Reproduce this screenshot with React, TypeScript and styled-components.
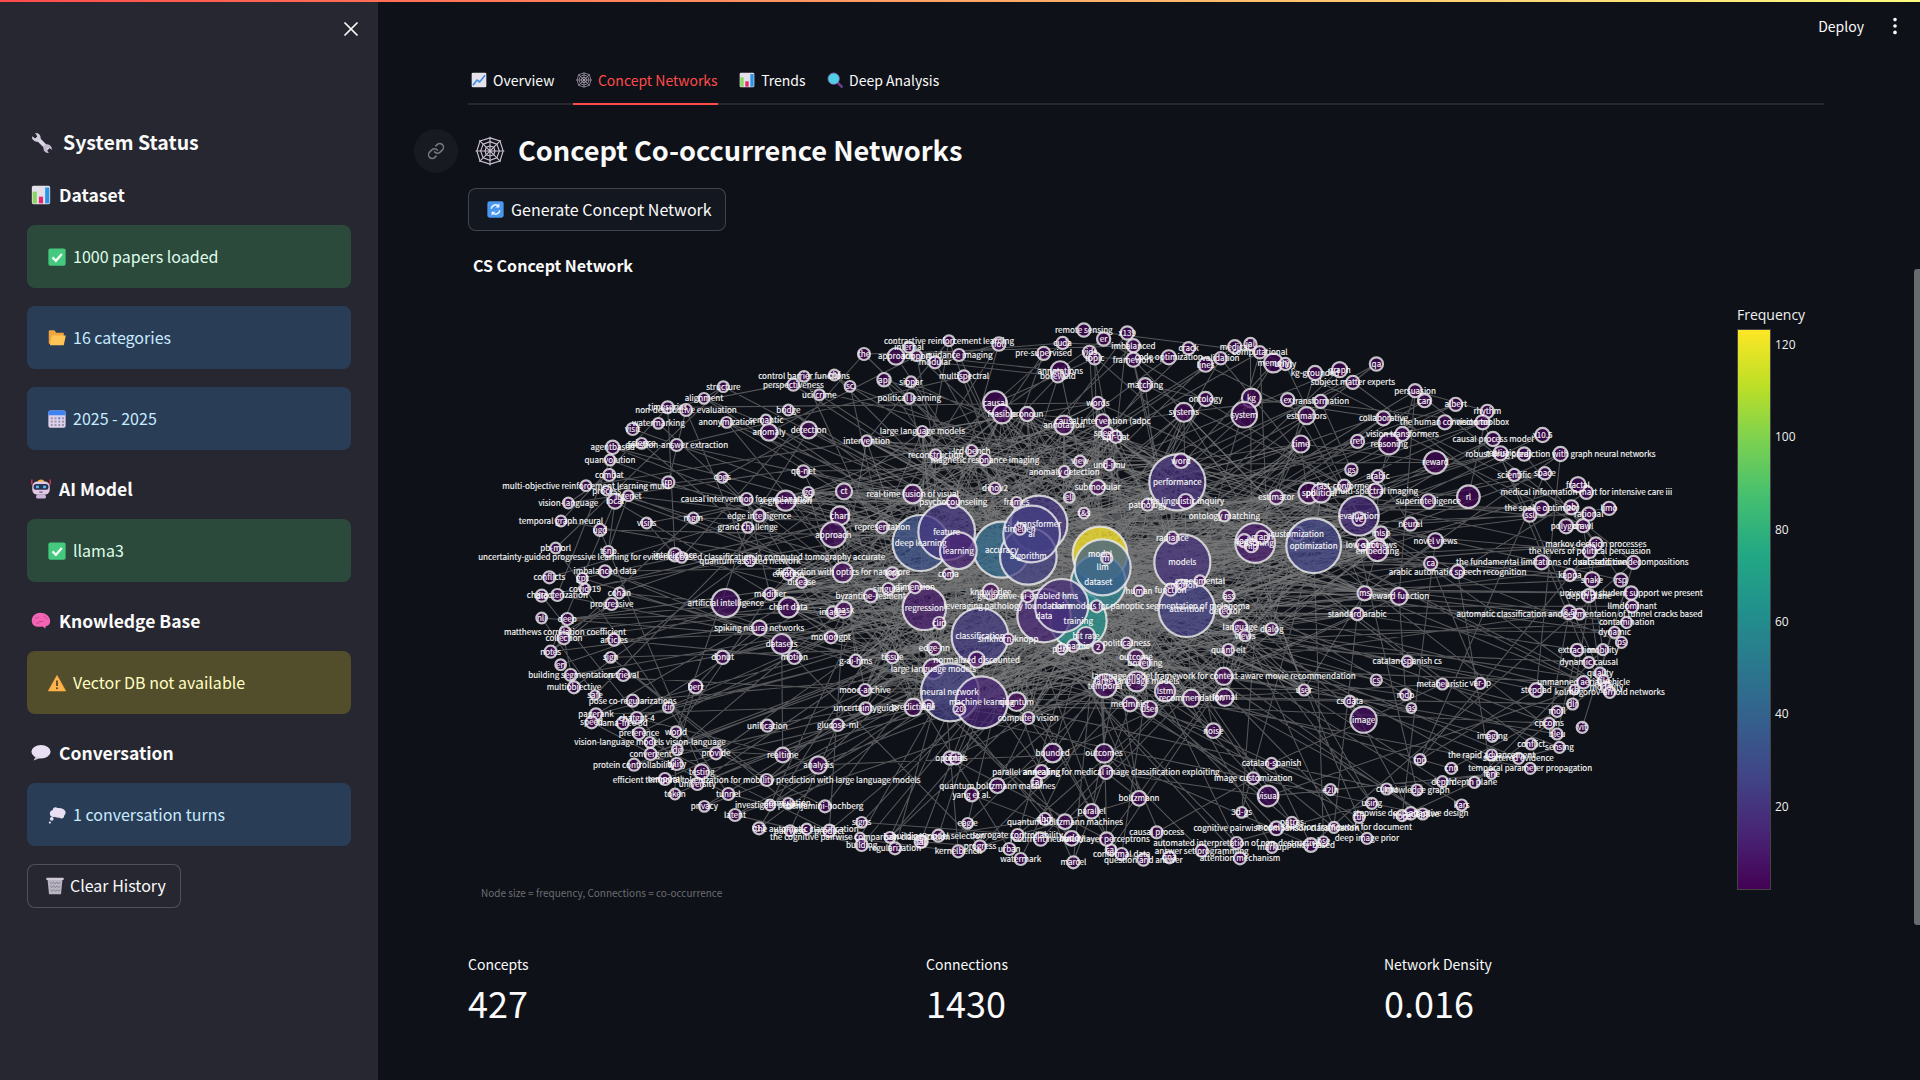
import React from "react";
import styled, { createGlobalStyle } from "styled-components";
import { EllipsisVertical, Link as LinkIcon, X } from "lucide-react";

const FONT = `"Noto Sans CJK SC", "Noto Sans", sans-serif`;

/* ---------- little emoji drawings ---------- */

const Glyph = styled.svg<{ $size?: number }>`
  width: ${({ $size }) => $size ?? 18}px;
  height: ${({ $size }) => $size ?? 18}px;
  flex-shrink: 0;
  display: block;
`;

type IconProps = { size?: number };

const WrenchIcon = ({ size }: IconProps) => (
  <Glyph $size={size} viewBox="0 0 24 24">
    <path d="M6 6L19 19" stroke="#dcd6e6" strokeWidth="4.4" />
    <path d="M1 4.5A5.500 5.500 0 0 0 9 10L10.500 7A5.500 5.500 0 0 0 4.500 1L7 5 4.800 7Z" fill="#d4cde0" />
    <path d="M23 19.500A5.500 5.500 0 0 0 15 14L13.500 17A5.500 5.500 0 0 0 19.500 23L17 19 19.200 17Z" fill="#c2bbcf" />
  </Glyph>
);

const BarsIcon = ({ size }: IconProps) => (
  <Glyph $size={size} viewBox="0 0 24 24">
    <rect x="1" y="1" width="22" height="22" rx="2" fill="#e4e0ea" />
    <rect x="2" y="8" width="5" height="14" fill="#8bd65f" />
    <rect x="9.5" y="14" width="5" height="8" fill="#e8256f" />
    <rect x="17" y="3" width="5" height="19" fill="#2a95e8" />
  </Glyph>
);

const TrendIcon = ({ size }: IconProps) => (
  <Glyph $size={size} viewBox="0 0 24 24">
    <rect x="1" y="1" width="22" height="22" rx="2" fill="#e6e2ec" />
    <path d="M3 20L9 12 13 15 21 5" fill="none" stroke="#3c8fe6" strokeWidth="2.4" />
  </Glyph>
);

const CheckIcon = ({ size }: IconProps) => (
  <Glyph $size={size} viewBox="0 0 24 24">
    <rect x="0.5" y="0.5" width="23" height="23" rx="2.5" fill="#45c97f" />
    <path d="M6 12.5L10.5 17 18.5 8" fill="none" stroke="#f5fff8" strokeWidth="3" />
  </Glyph>
);

const FolderIcon = ({ size }: IconProps) => (
  <Glyph $size={size} viewBox="0 0 24 24">
    <path d="M1 3a1.5 1.5 0 0 1 1.5-1.5h6L11 5h10v15H2.5A1.5 1.5 0 0 1 1 18.5Z" fill="#f0a63c" />
    <path d="M5 8.500h17.500a1 1 0 0 1 1 1.200L21 21.500H2.500Z" fill="#ffc456" />
  </Glyph>
);

const CalendarIcon = ({ size }: IconProps) => (
  <Glyph $size={size} viewBox="0 0 24 24">
    <rect x="0.5" y="0.5" width="23" height="23" rx="2.5" fill="#ddd2ea" />
    <path d="M0.500 7V3A2.500 2.500 0 0 1 3 0.500h18A2.500 2.500 0 0 1 23.500 3v4Z" fill="#3d83f2" />
    {[5, 10, 15, 20].map((x) =>
      [11, 15.5, 20].map((y) => (
        <rect key={`${x}-${y}`} x={x - 1.3} y={y - 1.3} width="2.600" height="2.600" fill={x === 15 && y === 11 ? "#3d83f2" : "#9a92ad"} />
      ))
    )}
  </Glyph>
);

const RobotIcon = ({ size }: IconProps) => (
  <Glyph $size={size} viewBox="0 0 24 24">
    <path d="M1 0.500v6M23 0.500v6" stroke="#e5375f" strokeWidth="1.600" />
    <path d="M8 3.500a4 3 0 0 1 8 0Z" fill="#f2b134" />
    <rect x="1.500" y="3" width="21" height="16" rx="6" fill="#e0c8e6" />
    <rect x="3" y="6" width="18" height="7" rx="3.500" fill="#2d3450" />
    <rect x="6" y="8" width="3.500" height="3" fill="#53b7f5" />
    <rect x="14.500" y="8" width="3.500" height="3" fill="#53b7f5" />
    <rect x="6" y="19" width="12" height="4.500" rx="2" fill="#cdb3d8" />
    <rect x="10" y="15" width="4" height="1.500" fill="#6d5a78" />
  </Glyph>
);

const BrainIcon = ({ size }: IconProps) => (
  <Glyph $size={size} viewBox="0 0 24 24">
    <path d="M1 13C0 7 5 2 11 2c6 0 12 4 12 10 0 4-2.500 6-5 6l-1 3-3-2.500C10 19 8 19 6 18.500 3 18 1.500 16 1 13Z" fill="#f265b4" />
    <path d="M5 9c2-2 4 0 5-2M9 13c2-2 4 1 6-1M15 6c1 2 4 1 4 4M6 15c1-1 3 0 4-1" fill="none" stroke="#c93c90" strokeWidth="1.100" />
  </Glyph>
);

const WarningIcon = ({ size }: IconProps) => (
  <Glyph $size={size} viewBox="0 0 24 24">
    <path d="M12 2L23.500 22.500H0.500Z" fill="#ffb24a" strokeLinejoin="round" stroke="#ffb24a" />
    <path d="M12 8.500V16" stroke="#4a3a2a" strokeWidth="2.200" />
    <circle cx="12" cy="19" r="1.300" fill="#4a3a2a" />
  </Glyph>
);

const SpeechIcon = ({ size }: IconProps) => (
  <Glyph $size={size} viewBox="0 0 24 24">
    <ellipse cx="12" cy="10.500" rx="11.500" ry="8" fill="#e8dff2" />
    <path d="M6 16l-3 5 8-3Z" fill="#d8cde6" />
  </Glyph>
);

const ThoughtIcon = ({ size }: IconProps) => (
  <Glyph $size={size} viewBox="0 0 24 24">
    <g fill="#e8dff2">
      <ellipse cx="14" cy="9" rx="9.500" ry="6.500" />
      <circle cx="7" cy="10" r="4.500" />
      <circle cx="10" cy="5" r="3.500" />
      <circle cx="18" cy="13" r="3.500" />
      <circle cx="5" cy="17" r="2.500" />
      <circle cx="2.500" cy="22" r="1.500" />
    </g>
  </Glyph>
);

const TrashIcon = ({ size }: IconProps) => (
  <Glyph $size={size} viewBox="0 0 24 24">
    <path d="M2 3h20l-2 20H4Z" fill="#b9b5c2" />
    <rect x="0.500" y="1" width="23" height="3" fill="#cfcbd6" />
    <path d="M5 7l2.400 2 2.400-2 2.400 2 2.400-2 2.400 2 2.400-2M5.500 12l2.300 2 2.300-2 2.300 2 2.300-2 2.300 2 2.200-2M6 17l2.200 2 2.200-2 2.200 2 2.200-2 2.200 2 2-2" fill="none" stroke="#706c78" strokeWidth="1" />
  </Glyph>
);

const WebIcon = ({ size }: IconProps) => (
  <Glyph $size={size} viewBox="0 0 24 24">
    <g fill="none" stroke="#c9c0d2" strokeWidth="0.900">
      <path d="M12 0.500V23.500M0.500 12H23.500M3.500 3.500L20.500 20.500M20.500 3.500L3.500 20.500" />
      <path d="M12 8L15 9 16 12 15 15 12 16 9 15 8 12 9 9Z" />
      <path d="M12 4.500L17.500 6.500 19.500 12 17.500 17.500 12 19.500 6.500 17.500 4.500 12 6.500 6.500Z" />
      <path d="M12 1.500L20 4 22.500 12 20 20 12 22.500 4 20 1.500 12 4 4Z" />
    </g>
  </Glyph>
);

const LensIcon = ({ size }: IconProps) => (
  <Glyph $size={size} viewBox="0 0 24 24">
    <path d="M15 15L22 22" stroke="#6a3d8c" strokeWidth="4" strokeLinecap="round" />
    <circle cx="10" cy="10" r="8.500" fill="#4fd0e8" stroke="#8a6ca8" strokeWidth="1.200" />
  </Glyph>
);

const RefreshIcon = ({ size }: IconProps) => (
  <Glyph $size={size} viewBox="0 0 24 24">
    <rect x="0.500" y="0.500" width="23" height="23" rx="3" fill="#4a97ef" />
    <path d="M6 11a6 6 0 0 1 10-4M18 13a6 6 0 0 1-10 4" fill="none" stroke="#eef6ff" strokeWidth="2.200" />
    <path d="M17.500 3.500v5.500h-5.500ZM6.500 20.500v-5.500h5.500Z" fill="#eef6ff" />
  </Glyph>
);

/* ---------- network data, read off the chart in crops of the page ---------- */

type Row = [number, number, number, string, number?];
type GraphNode = { x: number; y: number; r: number; label: string; freq: number };

const place = (ox: number, oy: number, sx: number, sy: number, rows: Row[]): GraphNode[] =>
  rows.map(([x, y, r, label, freq]) => ({
    x: ox + x / sx,
    y: oy + y / sy,
    r: r / sx,
    label,
    freq: freq ?? 2,
  }));

const centreRows: Row[] = [
  [892, 130, 84, "performance", 18],
  [907, 370, 84, "models", 18],
  [920, 510, 84, "attention", 24],
  [122, 312, 84, "deep learning", 32],
  [365, 332, 84, "accuracy", 44],
  [477, 255, 85, "transformer", 20],
  [445, 352, 85, "algorithm", 24],
  [455, 285, 85, "ai", 24],
  [200, 278, 85, "feature", 20],
  [235, 335, 55, "learning", 13],
  [660, 345, 82, "model", 125],
  [595, 545, 85, "training", 64],
  [655, 430, 82, "dataset", 55],
  [668, 385, 84, "llm", 36],
  [492, 530, 80, "data", 14],
  [545, 500, 80, "claim", 16],
  [133, 508, 65, "regression", 10],
  [300, 592, 85, "classification", 22],
  [903, 65, 22, "word", 4],
  [680, 357, 17, "ml"],
  [877, 296, 18, "radiance"],
  [960, 425, 16, "experimental"],
  [905, 437, 15, "emotion"],
  [872, 452, 18, "function"],
  [777, 455, 16, "human"],
  [167, 48, 17, "reconstruction"],
  [275, 35, 17, "lcd-bench"],
  [315, 62, 17, "magnetic resonance imaging"],
  [600, 67, 17, "view"],
  [688, 77, 17, "und-imu"],
  [553, 98, 17, "anomaly detection"],
  [345, 148, 17, "dinov2"],
  [220, 188, 19, "psychocounseling"],
  [653, 145, 22, "submodular", 3],
  [410, 190, 16, "frames"],
  [568, 175, 16, "eli"],
  [612, 222, 16, "t&s"],
  [803, 197, 18, "pathology"],
  [917, 187, 22, "the linguistic inquiry"],
  [1033, 230, 17, "ontology matching"],
  [420, 270, 17, "timellen"],
  [332, 458, 24, "knowledge", 3],
  [443, 472, 18, "generative-ai-enabled hms"],
  [650, 502, 18, "leveraging pathology foundation models for panoptic segmentation of melanoma"],
  [163, 628, 20, "edge-nn"],
  [385, 600, 16, "sinkhorn-knopp"],
  [290, 662, 24, "normalized discounted", 3],
  [160, 690, 30, "large language models", 4],
  [178, 552, 18, "clip"],
  [618, 592, 28, "bit rate", 4],
  [580, 620, 18, "dynamic"],
  [545, 630, 16, "push"],
  [655, 625, 18, "2"],
  [740, 612, 16, "politicalness"],
  [768, 655, 24, "outcome", 3],
  [795, 672, 16, "unveiling"],
  [1080, 565, 22, "language"],
  [1095, 590, 16, "views"],
  [1175, 570, 18, "dialog"],
  [1045, 632, 17, "quant-eit"],
  [1047, 470, 17, "ass"],
  [1035, 517, 16, "detector"],
  [675, 740, 35, "temporal", 5],
  [770, 727, 30, "large language models", 4],
  [855, 757, 30, "lstm", 4],
];

const leftRows: Row[] = [
  [1407, 65, 16, "contrastive reinforcement learning"],
  [1287, 85, 16, "internal"],
  [1152, 105, 18, "the"],
  [1248, 112, 25, "approach", 3],
  [1310, 110, 16, "support"],
  [1365, 130, 18, "modular"],
  [1437, 108, 18, "guidance imaging"],
  [1452, 172, 18, "multispectral"],
  [972, 172, 16, "control barrier functions"],
  [1063, 168, 16, "cbf"],
  [940, 197, 18, "perspectiveness"],
  [1110, 202, 16, "sc"],
  [1212, 182, 20, "api"],
  [1293, 188, 16, "sippar"],
  [1018, 227, 16, "uci crime"],
  [1288, 238, 16, "political learning"],
  [730, 203, 16, "structure"],
  [672, 238, 16, "alignment"],
  [563, 265, 18, "timeseries"],
  [618, 273, 18, "non-destructive evaluation"],
  [535, 313, 16, "watermarking"],
  [458, 330, 18, "visit"],
  [740, 310, 16, "anonymization"],
  [858, 303, 16, "semantic"],
  [925, 273, 16, "bridge"],
  [867, 340, 25, "anomaly", 3],
  [986, 333, 25, "detection", 3],
  [1327, 337, 16, "large language models"],
  [1160, 365, 16, "intervention"],
  [398, 385, 20, "agentbased"],
  [485, 373, 16, "science"],
  [590, 378, 18, "question-answer extraction"],
  [390, 423, 16, "quanvolution"],
  [388, 468, 18, "combat"],
  [727, 475, 16, "cogs"],
  [970, 457, 18, "qa-net"],
  [1092, 517, 24, "ct", 3],
  [985, 520, 16, "gq"],
  [318, 500, 16, "multi-objective reinforcement learning multi"],
  [565, 490, 18, "rp"],
  [380, 515, 14, "process"],
  [445, 530, 16, "lrgenet"],
  [405, 547, 22, "local"],
  [800, 540, 18, "causal intervention for explanation"],
  [917, 545, 30, "segmentation", 4],
  [265, 552, 16, "vision-language"],
  [243, 606, 16, "temporal graph neural"],
  [360, 633, 18, "ugd"],
  [500, 612, 16, "visits"],
  [640, 597, 16, "mgm"],
  [838, 590, 18, "edge intelligence"],
  [803, 625, 16, "grand challenge"],
  [1080, 590, 28, "chart", 4],
  [1060, 647, 38, "approach", 6],
  [1207, 625, 18, "representation"],
  [1298, 525, 28, "real-time fusion of visual", 4],
  [227, 687, 16, "pb-morl"],
  [385, 697, 16, "tsnp"],
  [585, 707, 20, "intelligence"],
  [605, 715, 16, "uncertainty-guided progressive learning for evidence-based classification in computed tomography accurate"],
  [810, 725, 16, "quantum-assisted network"],
  [375, 757, 18, "imbalanced data"],
  [208, 775, 18, "conflicts"],
  [307, 778, 16, "gpt"],
  [315, 810, 16, "covid-19"],
  [1305, 805, 18, "dimension"],
  [925, 765, 18, "emotion"],
  [965, 790, 16, "disease"],
  [1088, 760, 30, "distraction with optics for nanopore", 4],
  [1237, 763, 18, "lens"],
  [1405, 765, 16, "coma"],
  [232, 828, 18, "characterization"],
  [185, 830, 18, "dlc"],
  [418, 822, 16, "cohan"],
  [870, 825, 18, "modifier"],
  [1225, 810, 18, "singular"],
  [1172, 830, 20, "byzantine-resilient"],
];

const lowerLeftRows: Row[] = [
  [395, 15, 18, "progressive"],
  [737, 12, 42, "artificial intelligence", 7],
  [925, 25, 30, "chart data", 4],
  [1058, 40, 18, "images"],
  [1092, 32, 24, "mask", 3],
  [838, 87, 22, "spiking neural networks"],
  [905, 135, 30, "datasets", 4],
  [1053, 115, 18, "motiongpt"],
  [185, 57, 16, "nli"],
  [262, 60, 18, "deep"],
  [255, 98, 16, "matthews correlation coefficient"],
  [252, 118, 18, "collection"],
  [402, 122, 18, "articles"],
  [392, 175, 16, "sign"],
  [212, 158, 18, "notes"],
  [242, 197, 16, "en"],
  [272, 228, 18, "building segmentation"],
  [430, 228, 18, "retrieval"],
  [282, 265, 18, "multiobjective"],
  [345, 288, 14, "safe"],
  [458, 305, 18, "pose co-regularizations"],
  [565, 325, 16, "tir"],
  [348, 346, 18, "pagerank"],
  [470, 357, 18, "chatgpt-4"],
  [335, 370, 18, "speed"],
  [428, 373, 18, "llama-free 3d"],
  [477, 403, 18, "preference"],
  [588, 398, 16, "world"],
  [510, 430, 16, "vision-language models vision-language"],
  [592, 452, 16, "dg"],
  [512, 465, 18, "convergent"],
  [708, 463, 18, "provide"],
  [462, 497, 18, "protein controllability"],
  [590, 495, 18, "bility"],
  [665, 518, 22, "testing"],
  [860, 543, 18, "efficient temporal tokenization for mobility prediction with large language models"],
  [555, 540, 18, "temporal"],
  [652, 555, 18, "university"],
  [585, 585, 16, "token"],
  [745, 585, 18, "tunnel"],
  [673, 622, 16, "privacy"],
  [870, 618, 16, "investigate protein"],
  [925, 613, 16, "formulation"],
  [1035, 622, 18, "benjamini-hochberg"],
  [765, 648, 18, "latent"],
  [980, 690, 16, "the automatic classification"],
  [837, 688, 18, "c11"],
  [930, 695, 16, "pairwise"],
  [1048, 695, 18, "product"],
  [1140, 715, 14, "the cognitive pairwise comparison classification"],
  [1145, 670, 16, "signs"],
  [1145, 738, 18, "building"],
  [1245, 748, 18, "regularization"],
  [1325, 728, 18, "ell"],
  [1230, 715, 16, "bar"],
  [728, 175, 20, "donut"],
  [943, 175, 20, "motion"],
  [1127, 185, 18, "g-ai-hms"],
  [1237, 175, 18, "tissue"],
  [647, 263, 20, "bert"],
  [1155, 273, 18, "mooc-archive"],
  [1157, 328, 18, "uncertaintyguide"],
  [1073, 378, 18, "glucose-ml"],
  [862, 380, 18, "unification"],
  [908, 468, 22, "realtime"],
  [1015, 498, 26, "analysis", 3],
  [1410, 280, 87, "neural network", 24],
];

const lowerMiddleRows: Row[] = [
  [305, 40, 78, "machine learning", 14],
  [238, 60, 18, "20"],
  [100, 55, 26, "predictions", 3],
  [145, 48, 15, "ons"],
  [410, 38, 28, "quantum", 4],
  [445, 87, 18, "computer vision"],
  [750, 45, 22, "medmnist"],
  [808, 60, 24, "user", 3],
  [1000, 125, 22, "noise"],
  [518, 192, 28, "bounded", 4],
  [672, 193, 28, "outcomes", 4],
  [678, 250, 20, "parallel annealing for medical image classification exploiting"],
  [485, 248, 20, "annealing"],
  [352, 290, 22, "quantum boltzmann machines"],
  [275, 317, 20, "yang et al."],
  [470, 280, 16, "tai"],
  [777, 328, 22, "boltzmann"],
  [635, 367, 22, "parallel"],
  [555, 398, 22, "quantum boltzmann machines"],
  [495, 390, 18, "qbm"],
  [263, 403, 16, "eagle"],
  [1085, 370, 16, "3d-gs"],
  [1120, 268, 18, "image customization"],
  [830, 430, 18, "causal process"],
  [1070, 462, 18, "automated interpretation of non-destructive"],
  [965, 485, 18, "answer set programming"],
  [1080, 508, 18, "attention mechanism"],
  [790, 512, 18, "question and answer"],
  [868, 505, 18, "qna"],
  [725, 495, 18, "conformal data"],
  [693, 482, 16, "cal"],
  [680, 450, 20, "multilayer perceptrons"],
  [575, 448, 22, "buddy"],
  [482, 450, 20, "recurrent neural"],
  [413, 438, 18, "surrogate controllability"],
  [175, 440, 18, "building model selection"],
  [122, 458, 18, "tal"],
  [300, 472, 18, "progress"],
  [388, 480, 18, "urban"],
  [422, 510, 18, "watermark"],
  [580, 520, 18, "marcel"],
  [235, 487, 18, "kernelbench"],
  [210, 207, 20, "optimal"],
  [228, 208, 18, "optics"],
];

const upperRightRows: Row[] = [
  [220, 33, 14, "remote sensing"],
  [262, 60, 14, "er"],
  [312, 42, 14, "x139"],
  [175, 72, 13, "cuda"],
  [325, 80, 14, "imbalanced"],
  [40, 75, 14, "fol"],
  [135, 103, 14, "pre-supervised"],
  [232, 100, 14, "vids"],
  [243, 118, 13, "topic"],
  [325, 122, 15, "framework"],
  [400, 115, 15, "code optimization"],
  [510, 118, 13, "validation"],
  [478, 137, 15, "lines"],
  [442, 88, 13, "crack"],
  [540, 83, 14, "medical"],
  [573, 75, 13, "ial"],
  [593, 100, 13, "computational"],
  [622, 132, 20, "memory"],
  [647, 135, 13, "utility"],
  [710, 162, 15, "kg-grounded"],
  [762, 152, 16, "graph"],
  [840, 135, 14, "qa"],
  [790, 190, 14, "subject matter experts"],
  [922, 215, 14, "persuasion"],
  [942, 245, 14, "can"],
  [1008, 256, 14, "albert"],
  [1075, 277, 14, "rhythm"],
  [170, 155, 20, "annotations"],
  [165, 172, 13, "boreweld"],
  [350, 197, 14, "matching"],
  [32, 252, 25, "causal", 3],
  [47, 285, 20, "feasible"],
  [100, 285, 15, "pronoun"],
  [250, 252, 13, "words"],
  [478, 240, 15, "ontology"],
  [432, 280, 20, "systems"],
  [575, 237, 20, "kg"],
  [560, 287, 27, "system", 4],
  [652, 242, 14, "ex"],
  [722, 247, 14, "transformation"],
  [692, 290, 18, "estimators"],
  [855, 298, 15, "collaborative"],
  [985, 310, 15, "the human connectome"],
  [1065, 310, 15, "vision toolbox"],
  [260, 307, 15, "causal intervention (adpc"],
  [178, 318, 20, "annotation"],
  [270, 343, 13, "speech"],
  [288, 353, 13, "spr-qat"],
  [895, 345, 15, "vision transformers"],
  [680, 375, 18, "time"],
  [800, 367, 14, "ref"],
  [867, 375, 22, "reasoning"],
  [1087, 360, 15, "causal process model"],
  [1192, 348, 15, "x10.5"],
  [1230, 405, 15, "robust drug prediction with graph neural networks"],
  [1103, 403, 15, "realistic"],
  [1153, 405, 14, "traj"],
  [965, 430, 24, "reward", 3],
  [1035, 533, 24, "rl", 3],
  [787, 452, 13, "gs"],
  [843, 472, 13, "arabic"],
  [1132, 468, 13, "scientific"],
  [1197, 463, 13, "space"],
  [772, 500, 13, "fast-conformer"],
  [697, 522, 22, "spd"],
  [723, 522, 20, "political"],
  [838, 515, 15, "multi-spectral imaging"],
  [628, 535, 15, "estimator"],
  [950, 547, 15, "superintelligence"],
  [803, 590, 42, "evaluation", 16],
  [803, 600, 14, "ve"],
  [1285, 520, 14, "medical information mart for intensive care iii"],
  [1267, 497, 16, "fractal"],
  [1190, 568, 15, "the snake optimizer"],
  [1165, 588, 14, "ssl"],
  [1253, 565, 15, "pb"],
  [1333, 568, 14, "limo"],
  [1290, 585, 14, "rational"],
  [1242, 622, 15, "polygon"],
  [1278, 620, 14, "crawl"],
  [912, 615, 14, "neural"],
  [850, 642, 14, "mlsp"],
  [672, 645, 15, "customization"],
  [583, 672, 42, "reasoning", 9],
  [560, 665, 14, "code"],
  [598, 655, 14, "graph"],
  [575, 680, 14, "nlp"],
  [707, 680, 58, "optimization", 26],
  [810, 677, 13, "low-shot"],
  [845, 677, 13, "out views"],
  [842, 695, 22, "embedding"],
  [965, 665, 16, "novel views"],
  [955, 733, 14, "ca"],
  [1190, 730, 15, "the fundamental limitations of dual static cnn"],
  [1305, 675, 14, "markov decision processes"],
  [1292, 697, 14, "the levers of political persuasion"],
  [1385, 730, 14, "sub-additive decompositions"],
  [1012, 758, 14, "arabic automatic speech recognition"],
  [1250, 768, 13, "kappa"],
  [1297, 782, 16, "snake"],
  [1358, 783, 14, "rsp"],
  [815, 823, 15, "ms"],
  [888, 832, 18, "reward function"],
  [1380, 822, 14, "university student support we present"],
  [1290, 830, 14, "depth plane"],
];

const lowerRightRows: Row[] = [
  [515, 45, 18, "standard arabic"],
  [1160, 45, 16, "automatic classification and segmentation of tunnel cracks based"],
  [1130, 40, 20, "8.5"],
  [1313, 22, 18, "llmdominant"],
  [1297, 70, 16, "contamination"],
  [1262, 100, 16, "dynamic"],
  [1282, 130, 16, "ps"],
  [1153, 153, 18, "extraction"],
  [1228, 152, 16, "mobility"],
  [1187, 190, 16, "dynamic causal"],
  [1220, 222, 16, "quality"],
  [1230, 245, 16, "tile"],
  [1172, 250, 18, "unmanned aerial vehicle"],
  [1238, 265, 16, "modality"],
  [1248, 280, 16, "kolmogorov-arnold networks"],
  [1145, 272, 14, "kb"],
  [1035, 273, 20, "stepdad"],
  [1140, 315, 16, "dlr"],
  [1095, 337, 16, "mofl"],
  [1072, 373, 16, "cpcoms"],
  [1168, 385, 16, "vit"],
  [1095, 405, 16, "bleu"],
  [907, 412, 16, "imaging"],
  [1020, 435, 16, "conflict"],
  [1102, 445, 16, "sensing"],
  [905, 468, 16, "the rapid advancement"],
  [983, 478, 16, "scattered evidence"],
  [1017, 508, 16, "temporal parameter propagation"],
  [697, 482, 16, "tpp"],
  [788, 508, 16, "cnn"],
  [905, 525, 14, "fane"],
  [762, 548, 16, "depth"],
  [855, 550, 16, "depth plane"],
  [600, 570, 16, "cumu"],
  [688, 573, 16, "knowledge graph"],
  [437, 572, 16, "e2ln"],
  [818, 618, 16, "kars"],
  [557, 613, 16, "using"],
  [670, 643, 18, "stepwise deep adaptive design"],
  [645, 650, 16, "hops"],
  [705, 645, 16, "adaptive"],
  [520, 655, 16, "tur"],
  [325, 670, 16, "patras"],
  [280, 688, 20, "cognitive pairwise comparison classification"],
  [447, 685, 16, "model selection framework for document"],
  [543, 718, 16, "deep image prior"],
  [380, 738, 20, "policy-based"],
  [417, 727, 14, "bse"],
  [267, 745, 16, "markup"],
  [660, 187, 16, "catalan-spanish cs"],
  [570, 243, 16, "cs"],
  [360, 273, 16, "user"],
  [762, 255, 16, "metaheuristic"],
  [872, 253, 16, "var-lp"],
  [655, 287, 16, "mdp"],
  [493, 307, 16, "cs data"],
  [672, 327, 14, "as"],
  [533, 362, 38, "image", 6],
  [127, 232, 25, "language model framework for context-aware movie recommendation", 3],
  [33, 298, 25, "recommendation", 3],
  [130, 295, 25, "formal", 3],
  [266, 493, 16, "catalan-spanish"],
  [256, 591, 30, "visual", 5],
];

const nodes: GraphNode[] = [
  ...place(880, 440, 3, 3, centreRows),
  ...place(480, 320, 3, 3, leftRows),
  ...place(480, 600, 3, 3, lowerLeftRows),
  ...place(880, 690, 3, 3, lowerMiddleRows),
  ...place(980, 320, 2.119, 3, upperRightRows),
  ...place(1180, 600, 2.904, 3, lowerRightRows),
];

/* edges are not readable one by one, so spread them the way the chart does:
   the middle packed, the rim with a few long spokes towards it */
const buildEdges = () => {
  let seed = 12345;
  const random = () => {
    seed = (seed * 1664525 + 1013904223) % 4294967296;
    return seed / 4294967296;
  };
  const pick = (list: GraphNode[]) => list[Math.floor(random() * list.length)];
  const inner = nodes.filter((n) => ((n.x - 1080) / 330) ** 2 + ((n.y - 570) / 170) ** 2 < 1);
  const big = nodes.filter((n) => n.r > 20);
  const dist = (a: GraphNode, b: GraphNode) => Math.hypot(a.x - b.x, a.y - b.y);
  let rim = "";
  let core = "";
  const segment = (a: GraphNode, b: GraphNode) =>
    `M${a.x.toFixed(1)} ${a.y.toFixed(1)}L${b.x.toFixed(1)} ${b.y.toFixed(1)}`;
  nodes.forEach((a) => {
    const count = 1 + Math.floor(random() * 2.4);
    for (let i = 0; i < count; i++) {
      if (random() < 0.6) {
        rim += segment(a, random() < 0.5 ? pick(big) : pick(inner));
      } else {
        let best = pick(nodes);
        for (let k = 0; k < 8; k++) {
          const other = pick(nodes);
          if (other !== a && dist(a, other) < dist(a, best)) best = other;
        }
        rim += segment(a, best);
      }
    }
  });
  for (let i = 0; i < 800; i++) {
    core += segment(pick(inner), random() < 0.4 ? pick(big) : pick(inner));
  }
  return { rim, core };
};

const edges = buildEdges();

const VIRIDIS = ["#440154", "#482475", "#414487", "#355f8d", "#2a788e", "#21918c", "#22a884", "#44bf70", "#7ad151", "#bddf26", "#fde725"];

const viridis = (freq: number) => {
  const t = Math.min(1, Math.max(0, (freq - 1) / 124)) * (VIRIDIS.length - 1);
  const i = Math.min(VIRIDIS.length - 2, Math.floor(t));
  const hex = (c: string, p: number) => parseInt(c.slice(p, p + 2), 16);
  const mix = (p: number) => Math.round(hex(VIRIDIS[i], p) + (hex(VIRIDIS[i + 1], p) - hex(VIRIDIS[i], p)) * (t - i));
  return `rgb(${mix(1)},${mix(3)},${mix(5)})`;
};

const TICKS = [
  { label: "120", y: 350 },
  { label: "100", y: 442 },
  { label: "80", y: 535 },
  { label: "60", y: 627 },
  { label: "40", y: 719 },
  { label: "20", y: 812 },
];

const NetworkChart = () => (
  <ChartSvg viewBox="468 245 1356 675">
    <defs>
      <linearGradient id="viridis" x1="0" y1="1" x2="0" y2="0">
        {VIRIDIS.map((c, i) => (
          <stop key={c} offset={i / (VIRIDIS.length - 1)} stopColor={c} />
        ))}
      </linearGradient>
    </defs>
    <ChartTitle x="473" y="273">CS Concept Network</ChartTitle>
    <EdgeLines d={edges.rim} />
    <EdgeLines d={edges.core} />
    {nodes.map((n, i) => (
      <NodeDot key={i} cx={n.x} cy={n.y} r={n.r} fill={viridis(n.freq)} />
    ))}
    {nodes.map((n, i) => (
      <NodeLabel key={i} x={n.x} y={n.y + 3}>
        {n.label}
      </NodeLabel>
    ))}
    <Note x="481" y="898">Node size = frequency, Connections = co-occurrence</Note>
    <LegendTitle x="1737" y="321">Frequency</LegendTitle>
    <rect x="1737.5" y="330.5" width="33" height="560" fill="url(#viridis)" stroke="#444" />
    {TICKS.map((t) => (
      <Tick key={t.label} x="1775" y={t.y}>{t.label}</Tick>
    ))}
  </ChartSvg>
);

/* ---------- page ---------- */

type Tone = "success" | "info" | "warning";

const SIDEBAR: { title: string; icon: React.ReactNode; alerts: { tone: Tone; icon: React.ReactNode; text: string }[] }[] = [
  {
    title: "Dataset",
    icon: <BarsIcon size={20} />,
    alerts: [
      { tone: "success", icon: <CheckIcon />, text: "1000 papers loaded" },
      { tone: "info", icon: <FolderIcon />, text: "16 categories" },
      { tone: "info", icon: <CalendarIcon />, text: "2025 - 2025" },
    ],
  },
  {
    title: "AI Model",
    icon: <RobotIcon size={20} />,
    alerts: [{ tone: "success", icon: <CheckIcon />, text: "llama3" }],
  },
  {
    title: "Knowledge Base",
    icon: <BrainIcon size={20} />,
    alerts: [{ tone: "warning", icon: <WarningIcon />, text: "Vector DB not available" }],
  },
  {
    title: "Conversation",
    icon: <SpeechIcon size={20} />,
    alerts: [{ tone: "info", icon: <ThoughtIcon />, text: "1 conversation turns" }],
  },
];

const TABS = [
  { label: "Overview", icon: <TrendIcon size={16} /> },
  { label: "Concept Networks", icon: <WebIcon size={16} />, active: true },
  { label: "Trends", icon: <BarsIcon size={16} /> },
  { label: "Deep Analysis", icon: <LensIcon size={16} /> },
];

const METRICS = [
  { label: "Concepts", value: "427" },
  { label: "Connections", value: "1430" },
  { label: "Network Density", value: "0.016" },
];

export default function App() {
  return (
    <>
      <GlobalStyle />
      <Page>
        <Decoration />
        <Sidebar>
          <CloseRow>
            <X size={24} strokeWidth={1.75} color="#fafafa" />
          </CloseRow>
          <SystemTitle>
            <WrenchIcon size={22} />
            <TitleText>System Status</TitleText>
          </SystemTitle>
          {SIDEBAR.map((section) => (
            <section key={section.title}>
              <SectionTitle>
                {section.icon}
                <TitleText>{section.title}</TitleText>
              </SectionTitle>
              <AlertStack>
                {section.alerts.map((a) => (
                  <Alert key={a.text} $tone={a.tone}>
                    {a.icon}
                    <AlertText>{a.text}</AlertText>
                  </Alert>
                ))}
              </AlertStack>
            </section>
          ))}
          <ClearButton>
            <TrashIcon size={18} />
            <AlertText>Clear History</AlertText>
          </ClearButton>
        </Sidebar>
        <Main>
          <TopActions>
            <Deploy>Deploy</Deploy>
            <EllipsisVertical size={22} color="#fafafa" />
          </TopActions>
          <TabBar>
            {TABS.map((t) => (
              <Tab key={t.label} $active={t.active}>
                {t.icon}
                {t.label}
              </Tab>
            ))}
          </TabBar>
          <Heading>
            <AnchorLink>
              <LinkIcon size={18} color="#77797f" />
            </AnchorLink>
            <WebIcon size={30} />
            <HeadingText>Concept Co-occurrence Networks</HeadingText>
          </Heading>
          <GenerateButton>
            <RefreshIcon size={17} />
            <AlertText>Generate Concept Network</AlertText>
          </GenerateButton>
          <NetworkChart />
          <Metrics>
            {METRICS.map((m) => (
              <Metric key={m.label}>
                <MetricLabel>{m.label}</MetricLabel>
                <MetricValue>{m.value}</MetricValue>
              </Metric>
            ))}
          </Metrics>
          <ScrollThumb />
        </Main>
      </Page>
    </>
  );
}

const GlobalStyle = createGlobalStyle`
  * {
    box-sizing: border-box;
  }
  html, body {
    margin: 0;
    height: 100%;
    background: #0e1117;
    color: #fafafa;
    font-family: ${FONT};
    overflow: hidden;
  }
`;

const Page = styled.div`
  position: relative;
  display: grid;
  grid-template-columns: 378px 1fr;
  height: 100vh;
`;

const Decoration = styled.div`
  position: absolute;
  inset: 0 0 auto 0;
  height: 2px;
  z-index: 2;
  background: linear-gradient(90deg, #ff4b4b, #fffd80);
`;

const Sidebar = styled.aside`
  background: #262730;
  padding: 0 27px;
`;

const CloseRow = styled.div`
  display: flex;
  justify-content: flex-end;
  height: 129px;
  padding: 17px 0 0;
  margin-right: -12px;
`;

const TitleText = styled.span`
  position: relative;
  top: -1px;
`;

const SystemTitle = styled.h3`
  display: flex;
  align-items: center;
  gap: 10px;
  margin: 0;
  padding-left: 4px;
  height: 27px;
  font-size: 19.500px;
  font-weight: 600;
`;

const SectionTitle = styled.h4`
  display: flex;
  align-items: center;
  gap: 8px;
  height: 28px;
  margin: 25px 0 16px;
  padding-left: 4px;
  font-size: 17.500px;
  font-weight: 600;
`;

const AlertStack = styled.div`
  display: flex;
  flex-direction: column;
  gap: 18px;
`;

const ALERT_COLORS: Record<Tone, { bg: string; fg: string }> = {
  success: { bg: "#2b4a3b", fg: "#dffde9" },
  info: { bg: "#2a3d57", fg: "#c7ebff" },
  warning: { bg: "#524d2b", fg: "#ffffc2" },
};

const Alert = styled.div<{ $tone: Tone }>`
  display: flex;
  align-items: center;
  gap: 7px;
  height: 63px;
  padding: 0 21px;
  border-radius: 8px;
  font-size: 16px;
  background: ${({ $tone }) => ALERT_COLORS[$tone].bg};
  color: ${({ $tone }) => ALERT_COLORS[$tone].fg};
`;

const AlertText = styled.span`
  position: relative;
  top: -1px;
`;

const ClearButton = styled.button`
  display: flex;
  align-items: center;
  gap: 6px;
  height: 44px;
  margin-top: 18px;
  padding: 0 14px 0 18px;
  border: 1px solid rgba(250, 250, 250, 0.2);
  border-radius: 8px;
  background: #262730;
  color: #fafafa;
  font: 16px ${FONT};
`;

const Main = styled.main`
  position: relative;
  min-width: 0;
  padding: 60px 96px 0 90px;
`;

const TopActions = styled.div`
  position: absolute;
  top: 15px;
  right: 14px;
  display: flex;
  align-items: center;
  gap: 20px;
`;

const Deploy = styled.span`
  font-size: 14px;
`;

const TabBar = styled.div`
  display: flex;
  gap: 18.500px;
  height: 45px;
  border-bottom: 2px solid #262730;
`;

const Tab = styled.div<{ $active?: boolean }>`
  display: flex;
  align-items: center;
  gap: 6px;
  height: 45px;
  padding: 0 0 4px 3px;
  font-size: 14px;
  color: ${({ $active }) => ($active ? "#ff4b4b" : "#fafafa")};
  border-bottom: 2px solid ${({ $active }) => ($active ? "#ff4b4b" : "transparent")};
`;

const Heading = styled.h2`
  position: relative;
  display: flex;
  align-items: center;
  gap: 13px;
  height: 52px;
  margin: 20px 0 11px;
  padding-left: 7px;
  font-size: 27.200px;
  font-weight: 600;
`;

const HeadingText = styled.span`
  position: relative;
  top: -2.500px;
`;

const AnchorLink = styled.div`
  position: absolute;
  left: -54px;
  top: 4px;
  width: 44px;
  height: 44px;
  border-radius: 50%;
  background: #171a21;
  display: flex;
  align-items: center;
  justify-content: center;
`;

const GenerateButton = styled.button`
  display: flex;
  align-items: center;
  gap: 7px;
  height: 43px;
  padding: 0 13px 0 18px;
  border: 1px solid rgba(250, 250, 250, 0.2);
  border-radius: 8px;
  background: #13171f;
  color: #fafafa;
  font: 16px ${FONT};
`;

const ChartSvg = styled.svg`
  display: block;
  width: 1356px;
  height: 675px;
  margin-top: 13px;
`;

const ChartTitle = styled.text`
  font-size: 16px;
  font-weight: 700;
  fill: #fafafa;
`;

const EdgeLines = styled.path`
  fill: none;
  stroke: #8e8e8e;
  stroke-opacity: 0.55;
  stroke-width: 1.100;
`;

const NodeDot = styled.circle`
  stroke: #ececec;
  stroke-width: 2.200;
  stroke-opacity: 0.82;
  fill-opacity: 0.72;
`;

const NodeLabel = styled.text`
  font-size: 8.100px;
  fill: #f8f8f8;
  stroke: #f8f8f8;
  stroke-width: 0.120;
  text-anchor: middle;
`;

const Note = styled.text`
  font-size: 10px;
  fill: #6c6e74;
`;

const LegendTitle = styled.text`
  font-family: "Open Sans", sans-serif;
  font-size: 14px;
  fill: #f0f0f0;
`;

const Tick = styled.text`
  font-family: "Open Sans", sans-serif;
  font-size: 12px;
  fill: #f0f0f0;
`;

const Metrics = styled.div`
  display: grid;
  grid-template-columns: repeat(3, 458px);
  margin-top: 34px;
`;

const Metric = styled.div`
  display: flex;
  flex-direction: column;
`;

const MetricLabel = styled.div`
  font-size: 14px;
  line-height: 22px;
`;

const MetricValue = styled.div`
  font-size: 36px;
  line-height: 52px;
  margin-top: 1px;
`;

const ScrollThumb = styled.div`
  position: absolute;
  right: 0;
  top: 269px;
  width: 6px;
  height: 656px;
  border-radius: 3px 0 0 3px;
  background: #696a6e;
`;
